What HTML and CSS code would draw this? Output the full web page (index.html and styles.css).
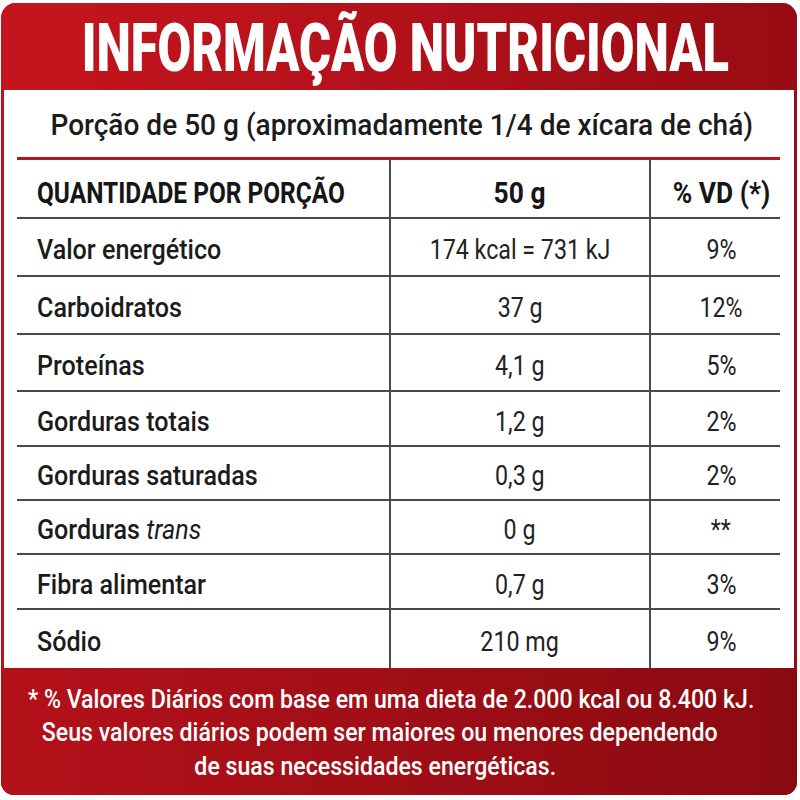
FILE: index.html
```html
<!DOCTYPE html>
<html lang="pt-BR">
<head>
<meta charset="utf-8">
<title>Informação Nutricional</title>
<link rel="stylesheet" href="styles.css">
</head>
<body>
<div class="card">
  <header class="head">
    <h1 class="title"><span class="sq">INFORMAÇÃO NUTRICIONAL</span></h1>
  </header>
  <section class="panel">
    <p class="serving"><span class="sq">Porção de 50 g (aproximadamente 1/4 de xícara de chá)</span></p>
    <div class="facts">
      <div class="row row-head h59">
        <div class="cell c1"><span class="sq">QUANTIDADE POR PORÇÃO</span></div>
        <div class="cell c2"><span class="sq">50 g</span></div>
        <div class="cell c3"><span class="sq">% VD (*)</span></div>
      </div>
      <div class="row h58">
        <div class="cell c1"><span class="sq">Valor energético</span></div>
        <div class="cell c2"><span class="sq">174 kcal = 731 kJ</span></div>
        <div class="cell c3"><span class="sq">9%</span></div>
      </div>
      <div class="row h58">
        <div class="cell c1"><span class="sq">Carboidratos</span></div>
        <div class="cell c2"><span class="sq">37 g</span></div>
        <div class="cell c3"><span class="sq">12%</span></div>
      </div>
      <div class="row h57">
        <div class="cell c1"><span class="sq">Proteínas</span></div>
        <div class="cell c2"><span class="sq">4,1 g</span></div>
        <div class="cell c3"><span class="sq">5%</span></div>
      </div>
      <div class="row h55">
        <div class="cell c1"><span class="sq">Gorduras totais</span></div>
        <div class="cell c2"><span class="sq">1,2 g</span></div>
        <div class="cell c3"><span class="sq">2%</span></div>
      </div>
      <div class="row h54">
        <div class="cell c1"><span class="sq">Gorduras saturadas</span></div>
        <div class="cell c2"><span class="sq">0,3 g</span></div>
        <div class="cell c3"><span class="sq">2%</span></div>
      </div>
      <div class="row h54">
        <div class="cell c1"><span class="sq">Gorduras <em>trans</em></span></div>
        <div class="cell c2"><span class="sq">0 g</span></div>
        <div class="cell c3"><span class="sq">**</span></div>
      </div>
      <div class="row h55">
        <div class="cell c1"><span class="sq">Fibra alimentar</span></div>
        <div class="cell c2"><span class="sq">0,7 g</span></div>
        <div class="cell c3"><span class="sq">3%</span></div>
      </div>
      <div class="row h58 last">
        <div class="cell c1"><span class="sq">Sódio</span></div>
        <div class="cell c2"><span class="sq">210 mg</span></div>
        <div class="cell c3"><span class="sq">9%</span></div>
      </div>
    </div>
  </section>
  <footer class="foot">
    <p class="fline l1"><span class="sq">* % Valores Diários com base em uma dieta de 2.000 kcal ou 8.400 kJ.</span></p>
    <p class="fline l2"><span class="sq">Seus valores diários podem ser maiores ou menores dependendo</span></p>
    <p class="fline l3"><span class="sq">de suas necessidades energéticas.</span></p>
  </footer>
</div>
</body>
</html>
```
FILE: styles.css
```css
* {
  box-sizing: border-box;
  margin: 0;
  padding: 0;
}

html, body {
  width: 800px;
  height: 800px;
  overflow: hidden;
  background: #ffffff;
}

body {
  font-family: Roboto, "Liberation Sans", sans-serif;
  color: #1b1b1b;
}

.card {
  margin: 3px 0 0 1px;
  width: 796px;
  height: 792px;
  border-radius: 15px 15px 13px 13px;
  overflow: hidden;
  display: flex;
  flex-direction: column;
  background: linear-gradient(90deg, #b7141d 0%, #a7121a 50%, #960c13 100%);
}

.sq {
  display: inline-block;
  white-space: nowrap;
  flex: none;
}

/* header */
.head {
  height: 87px;
  padding-top: 13px;
  padding-left: 12px;
  background: linear-gradient(90deg, #c5151e 0%, #b5121b 45%, #980b13 100%);
}

.title {
  display: flex;
  justify-content: center;
  font-size: 66px;
  line-height: 66px;
  font-weight: 900;
  color: #ffffff;
}

.title .sq {
  transform: scaleX(0.74);
}

/* white panel */
.panel {
  margin: 0 3px;
  background: #ffffff;
  padding: 0 14px 0 13px;
}

.serving {
  display: flex;
  justify-content: center;
  height: 70px;
  padding-top: 20px;
  padding-left: 7px;
  font-size: 30px;
  line-height: 30px;
  font-weight: 500;
  border-bottom: 3px solid #b3141d;
}

.serving .sq {
  transform: scaleX(0.935);
}

/* table */
.row {
  display: grid;
  grid-template-columns: 372px 260px 131px;
  border-bottom: 2px solid #4a4a4a;
}

.row.last {
  border-bottom: 0;
}

.h59 { height: 59px; }
.h58 { height: 58px; }
.h57 { height: 57px; }
.h55 { height: 55px; }
.h54 { height: 54px; }

.cell {
  display: flex;
  align-items: center;
  padding-top: 6px;
  font-size: 27px;
  white-space: nowrap;
}

.c1 {
  padding-left: 20px;
  font-weight: 500;
}

.c1 .sq {
  transform-origin: left center;
  transform: scaleX(0.93);
}

.c2,
.c3 {
  justify-content: center;
  border-left: 2px solid #4a4a4a;
  font-weight: 400;
  color: #222222;
}

.c3 {
  padding-left: 11px;
}

.c2 .sq,
.c3 .sq {
  transform: scaleX(0.86);
}

.c1 em {
  font-style: italic;
  font-weight: 400;
}

.row-head .cell {
  padding-top: 8px;
  font-size: 30px;
  font-weight: 700;
  color: #161616;
}

.row-head .c1 .sq {
  transform: scaleX(0.815);
}

.row-head .c2 .sq,
.row-head .c3 .sq {
  transform: scaleX(0.88);
}

/* footer */
.foot {
  flex: 1;
  padding-top: 15px;
  color: #ffffff;
  font-size: 26px;
  line-height: 33.4px;
  font-weight: 500;
  background: linear-gradient(90deg, #b4111a 0%, #a00e16 50%, #8a0a10 100%);
}

.fline {
  display: flex;
  justify-content: center;
}

.fline .sq {
  transform: scaleX(0.89);
}

.l1 { padding-right: 16px; }
.l2 { padding-right: 38px; }
.l3 { padding-right: 48px; }
```
